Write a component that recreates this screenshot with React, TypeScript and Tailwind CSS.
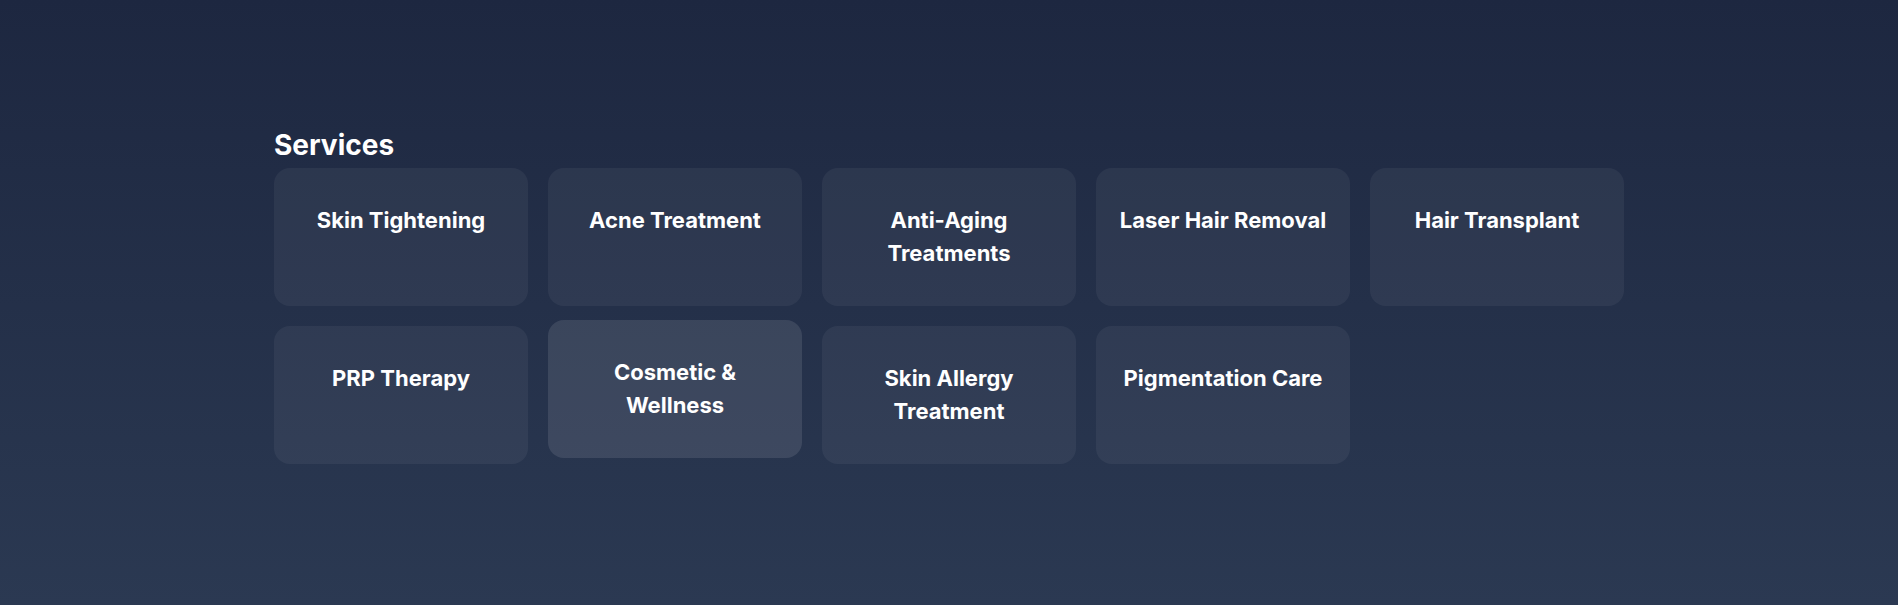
import React from 'react';

const services = [
  'Skin Tightening',
  'Acne Treatment',
  'Anti-Aging Treatments',
  'Laser Hair Removal',
  'Hair Transplant',
  'PRP Therapy',
  'Cosmetic & Wellness',
  'Skin Allergy Treatment',
  'Pigmentation Care',
];

// the reference catches "Cosmetic & Wellness" mid-hover
const hovered = 'Cosmetic & Wellness';

export default function App() {
  return (
    <div
      className="min-h-[605px] w-full bg-gradient-to-b from-[#1d2740] to-[#2b3952] pt-[128px] text-white"
      style={{ fontFamily: 'Inter, "Noto Sans", sans-serif' }}
    >
      <section className="mx-auto w-[1350px]">
        <h2 className="mb-[5px] text-[28px] font-bold leading-[35px]">Services</h2>

        <div className="grid grid-cols-5 gap-5">
          {services.map((name) => (
            <div
              key={name}
              className={`h-[138px] rounded-2xl px-5 pt-9 text-center transition-all ${
                name === hovered ? '-translate-y-1.5 bg-white/10' : 'bg-white/5'
              }`}
            >
              <h3 className="text-[22px] font-bold leading-[33px]">{name}</h3>
            </div>
          ))}
        </div>
      </section>
    </div>
  );
}
